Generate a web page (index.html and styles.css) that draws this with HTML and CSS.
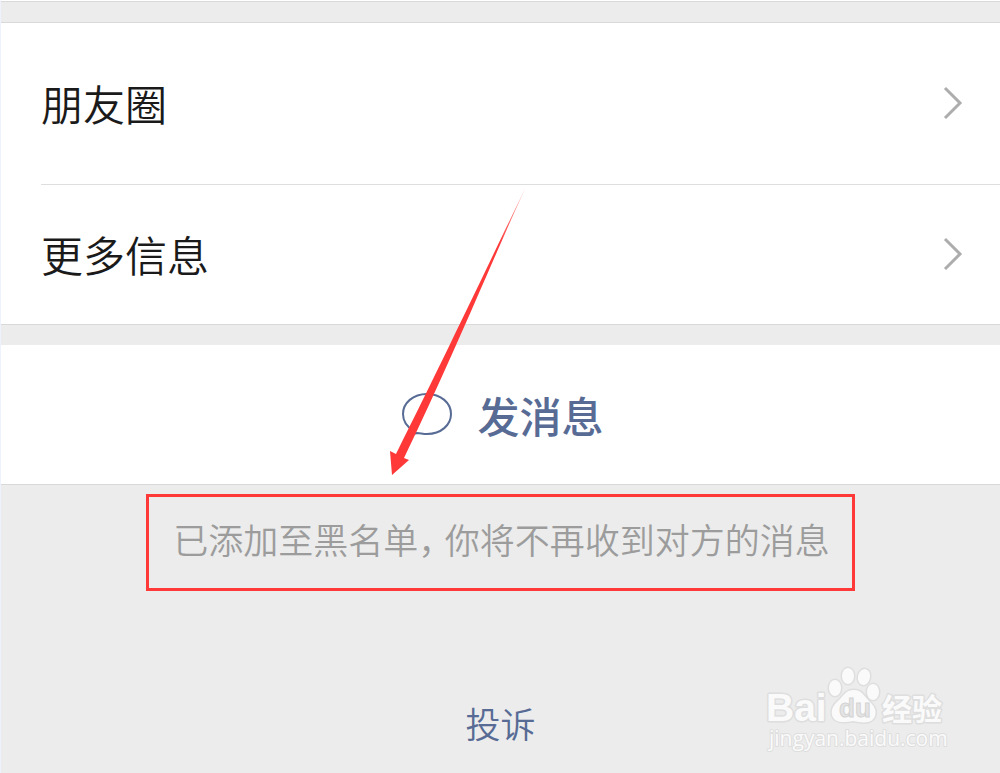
FILE: index.html
```html
<!DOCTYPE html>
<html lang="zh-CN">
<head>
<meta charset="utf-8">
<meta name="viewport" content="width=device-width, initial-scale=1">
<title>详细资料</title>
<link rel="stylesheet" href="styles.css">
</head>
<body>
<main class="page">
  <nav class="list">
    <a class="row row-tall" href="#moments">
      <span>朋友圈</span>
      <svg class="chevron" viewBox="0 0 20 34" aria-hidden="true"><path d="M2 2 17 17 2 32"/></svg>
    </a>
    <a class="row" href="#more">
      <span>更多信息</span>
      <svg class="chevron" viewBox="0 0 20 34" aria-hidden="true"><path d="M2 2 17 17 2 32"/></svg>
    </a>
  </nav>
  <section class="action">
    <button class="message" type="button">
      <svg class="bubble" viewBox="0 0 52 46" aria-hidden="true"><path d="M13 39C6 35 2 29 2 22C2 11 12 2 26 2S50 11 50 22S40 42 26 42C22 42 19 41 16 41L9 43Q13 42 13 39Z"/></svg>
      <span>发消息</span>
    </button>
    <svg class="arrow" viewBox="0 0 140 290" aria-hidden="true">
      <defs><linearGradient id="fade" x1="0" y1="1" x2="0" y2="0"><stop offset="0.8" stop-color="#ff3838"/><stop offset="1" stop-color="#ff3838" stop-opacity="0.4"/></linearGradient></defs>
      <path fill="url(#fade)" d="M136 1 C106 62 60 160 6 268L0 265 2 289 19 274 14 272C63 171 107 63 136 1Z"/>
    </svg>
  </section>
  <section class="footer">
    <p class="notice">已添加至黑名单<span class="comma">，</span>你将不再收到对方的消息</p>
    <a class="report" href="#report">投诉</a>
  </section>
  <svg class="watermark" viewBox="0 0 190 90" role="img" aria-label="Baidu 经验 jingyan.baidu.com">
    <g class="mark">
      <ellipse cx="73" cy="22" rx="6" ry="8"/>
      <ellipse cx="86" cy="10" rx="6" ry="8"/>
      <ellipse cx="102" cy="11" rx="6" ry="8" transform="rotate(12 102 11)"/>
      <ellipse cx="111" cy="26" rx="6" ry="8"/>
      <path d="M92 24C84 24 82 29 77 34C71 39 69 44 70 49C72 57 81 57 91 55C101 57 110 58 113 50C115 44 112 40 107 35C101 29 100 24 92 24Z"/>
      <text class="brand" x="4" y="55">Bai</text>
      <text class="site" x="120" y="54">经验</text>
      <text class="url" x="7" y="80">jingyan.baidu.com</text>
    </g>
    <text class="du" x="77" y="51">du</text>
  </svg>
</main>
</body>
</html>
```
FILE: styles.css
```css
* {
  box-sizing: border-box;
}

body {
  margin: 0;
  background: #ececec;
  color: #1a1a1a;
  font-family: "Noto Sans CJK SC", sans-serif;
  font-weight: 350;
}

a {
  color: inherit;
  text-decoration: none;
}

.page {
  position: relative;
  min-height: 100vh;
  overflow: hidden;
  border-top: 1px solid #fff;
  border-left: 1px solid #edf2fc;
}

.list {
  margin-bottom: 20px;
  padding-left: 40px;
  border-top: 1px solid #d9d9d9;
  border-bottom: 1px solid #d9d9d9;
  background: linear-gradient(#ececec 20px, #d9d9d9 20px, #d9d9d9 21px, #fff 21px);
  padding-top: 21px;
}

.row {
  display: flex;
  align-items: center;
  justify-content: space-between;
  padding: 39px 37px 40px 0;
  font-size: 42px;
  line-height: 60px;
}

.row-tall {
  padding: 50px 37px 51px 0;
  border-bottom: 1px solid #dedede;
}

.chevron {
  width: 20px;
  height: 34px;
  fill: none;
  stroke: #adadad;
  stroke-width: 3;
}

.action {
  position: relative;
  border-bottom: 1px solid #d9d9d9;
  background: #fff;
}

.message {
  display: flex;
  align-items: center;
  justify-content: center;
  gap: 24px;
  width: 100%;
  padding: 40px 0 39px 4px;
  border: 0;
  background: none;
  color: #576b95;
  font-family: inherit;
  font-size: 42px;
  font-weight: 500;
  line-height: 60px;
}

.bubble {
  width: 52px;
  height: 46px;
  fill: none;
  stroke: #576b95;
  stroke-width: 2;
}

.arrow {
  position: absolute;
  left: calc(50% - 111px);
  bottom: 8px;
  width: 140px;
  height: 290px;
  pointer-events: none;
}

.footer {
  display: flex;
  flex-direction: column;
  align-items: center;
  gap: 107px;
  padding: 9px 16px 22px;
}

.notice {
  margin: 0;
  padding: 17px 22px 24px 24px;
  border: 3px solid #ff3838;
  color: #9c9c9c;
  font-size: 35px;
  line-height: 50px;
}

.comma {
  margin-right: 9px;
  font-feature-settings: "halt";
}

.report {
  color: #576b95;
  font-size: 35px;
  line-height: 50px;
}

.watermark {
  position: absolute;
  right: 48px;
  bottom: 17px;
  width: 190px;
  height: 90px;
}

.mark {
  fill: #fafafa;
  stroke: #dedede;
  stroke-width: 3;
  stroke-linejoin: round;
  paint-order: stroke;
}

.brand,
.du {
  font-family: "Liberation Sans", sans-serif;
  font-weight: 700;
}

.brand {
  font-size: 39px;
}

.du {
  fill: #e4e4e4;
  stroke: #d4d4d4;
  font-size: 26px;
}

.site {
  font-size: 30px;
  font-weight: 700;
}

.url {
  font-family: "Open Sans", sans-serif;
  font-size: 21px;
  font-weight: 400;
  stroke-width: 2;
}
```
